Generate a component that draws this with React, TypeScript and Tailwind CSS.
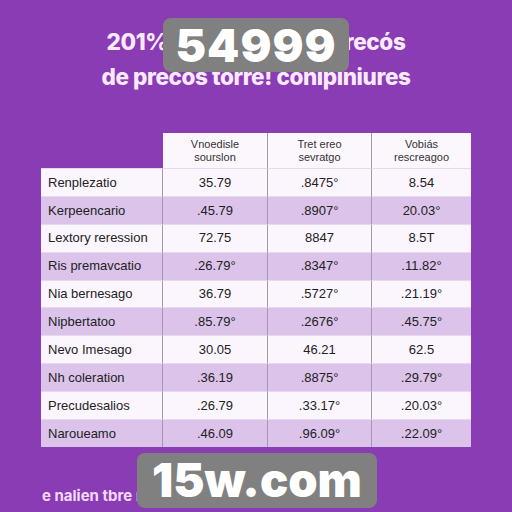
import React from "react";

const rows = [
  { name: "Renplezatio", a: "35.79", b: ".8475°", c: "8.54" },
  { name: "Kerpeencario", a: ".45.79", b: ".8907°", c: "20.03°" },
  { name: "Lextory reression", a: "72.75", b: "8847", c: "8.5T" },
  { name: "Ris premavcatio", a: ".26.79°", b: ".8347°", c: ".11.82°" },
  { name: "Nia bernesago", a: "36.79", b: ".5727°", c: ".21.19°" },
  { name: "Nipbertatoo", a: ".85.79°", b: ".2676°", c: ".45.75°" },
  { name: "Nevo Imesago", a: "30.05", b: "46.21", c: "62.5" },
  { name: "Nh coleration", a: ".36.19", b: ".8875°", c: ".29.79°" },
  { name: "Precudesalios", a: ".26.79", b: ".33.17°", c: ".20.03°" },
  { name: "Naroueamo", a: ".46.09", b: ".96.09°", c: ".22.09°" },
];

export default function App() {
  return (
    <div
      className="relative w-[512px] h-[512px] overflow-hidden bg-[#8a3cb4]"
      style={{ fontFamily: "'Liberation Sans', Arial, sans-serif" }}
    >
      <div className="pt-[24px] flex flex-col items-center text-[#fbe9ff] font-extrabold text-[22.5px] leading-[35px] tracking-[-0.4px]" style={{ fontFamily: "Inter, 'Liberation Sans', sans-serif" }}>
        <div>201% comparativo de recós</div>
        <div>de precos torre! conipiniures</div>
      </div>

      <div className="mt-[39px] ml-[41px] w-[430px] grid grid-cols-[122px_105px_104px_99px] text-[13px] text-[#222]">
        <div className="h-[35px]" />
        <div className="h-[35px] bg-[#fbf7fc] border-r border-[#a697ad] flex items-center justify-center text-center text-[11px] leading-[13px] text-[#333]">Vnoedisle<br />sourslon</div>
        <div className="h-[35px] bg-[#fbf7fc] border-r border-[#a697ad] flex items-center justify-center text-center text-[11px] leading-[13px] text-[#333]">Tret ereo<br />sevratgo</div>
        <div className="h-[35px] bg-[#fbf7fc] flex items-center justify-center text-center text-[11px] leading-[13px] text-[#333]">Vobiás<br />rescreagoo</div>
        {rows.map((r, i) => {
          const bg = i % 2 === 0 ? "bg-[#fbf6fd]" : "bg-[#dcc3ea]";
          return (
            <React.Fragment key={i}>
              <div className={`h-[27.9px] ${bg} border-t border-[#e6d9ee] border-r border-r-[#a697ad] flex items-center pl-[7px]`}>{r.name}</div>
              <div className={`h-[27.9px] ${bg} border-t border-[#e6d9ee] border-r border-r-[#a697ad] flex items-center justify-center`}>{r.a}</div>
              <div className={`h-[27.9px] ${bg} border-t border-[#e6d9ee] border-r border-r-[#a697ad] flex items-center justify-center`}>{r.b}</div>
              <div className={`h-[27.9px] ${bg} border-t border-[#e6d9ee] flex items-center justify-center`}>{r.c}</div>
            </React.Fragment>
          );
        })}
      </div>

      <div className="mt-[38px] ml-[42px] text-[15px] font-bold text-[#f3d9fb]" style={{ fontFamily: "Inter, 'Liberation Sans', sans-serif" }}>
        e nalien tbre mercado
      </div>

      <div className="absolute left-[163px] top-[18px] w-[186px] h-[54px] rounded-[8px] bg-[#808080] flex items-center justify-center text-white font-black text-[46px] tracking-[1px]" style={{ fontFamily: "Inter, 'Open Sans', sans-serif" }}>
        54999
      </div>
      <div className="absolute left-[137px] top-[453px] w-[240px] h-[55px] rounded-[8px] bg-[#808080] flex items-center justify-center text-white font-black text-[47px]" style={{ fontFamily: "Inter, 'Open Sans', sans-serif" }}>
        15w.com
      </div>
    </div>
  );
}
